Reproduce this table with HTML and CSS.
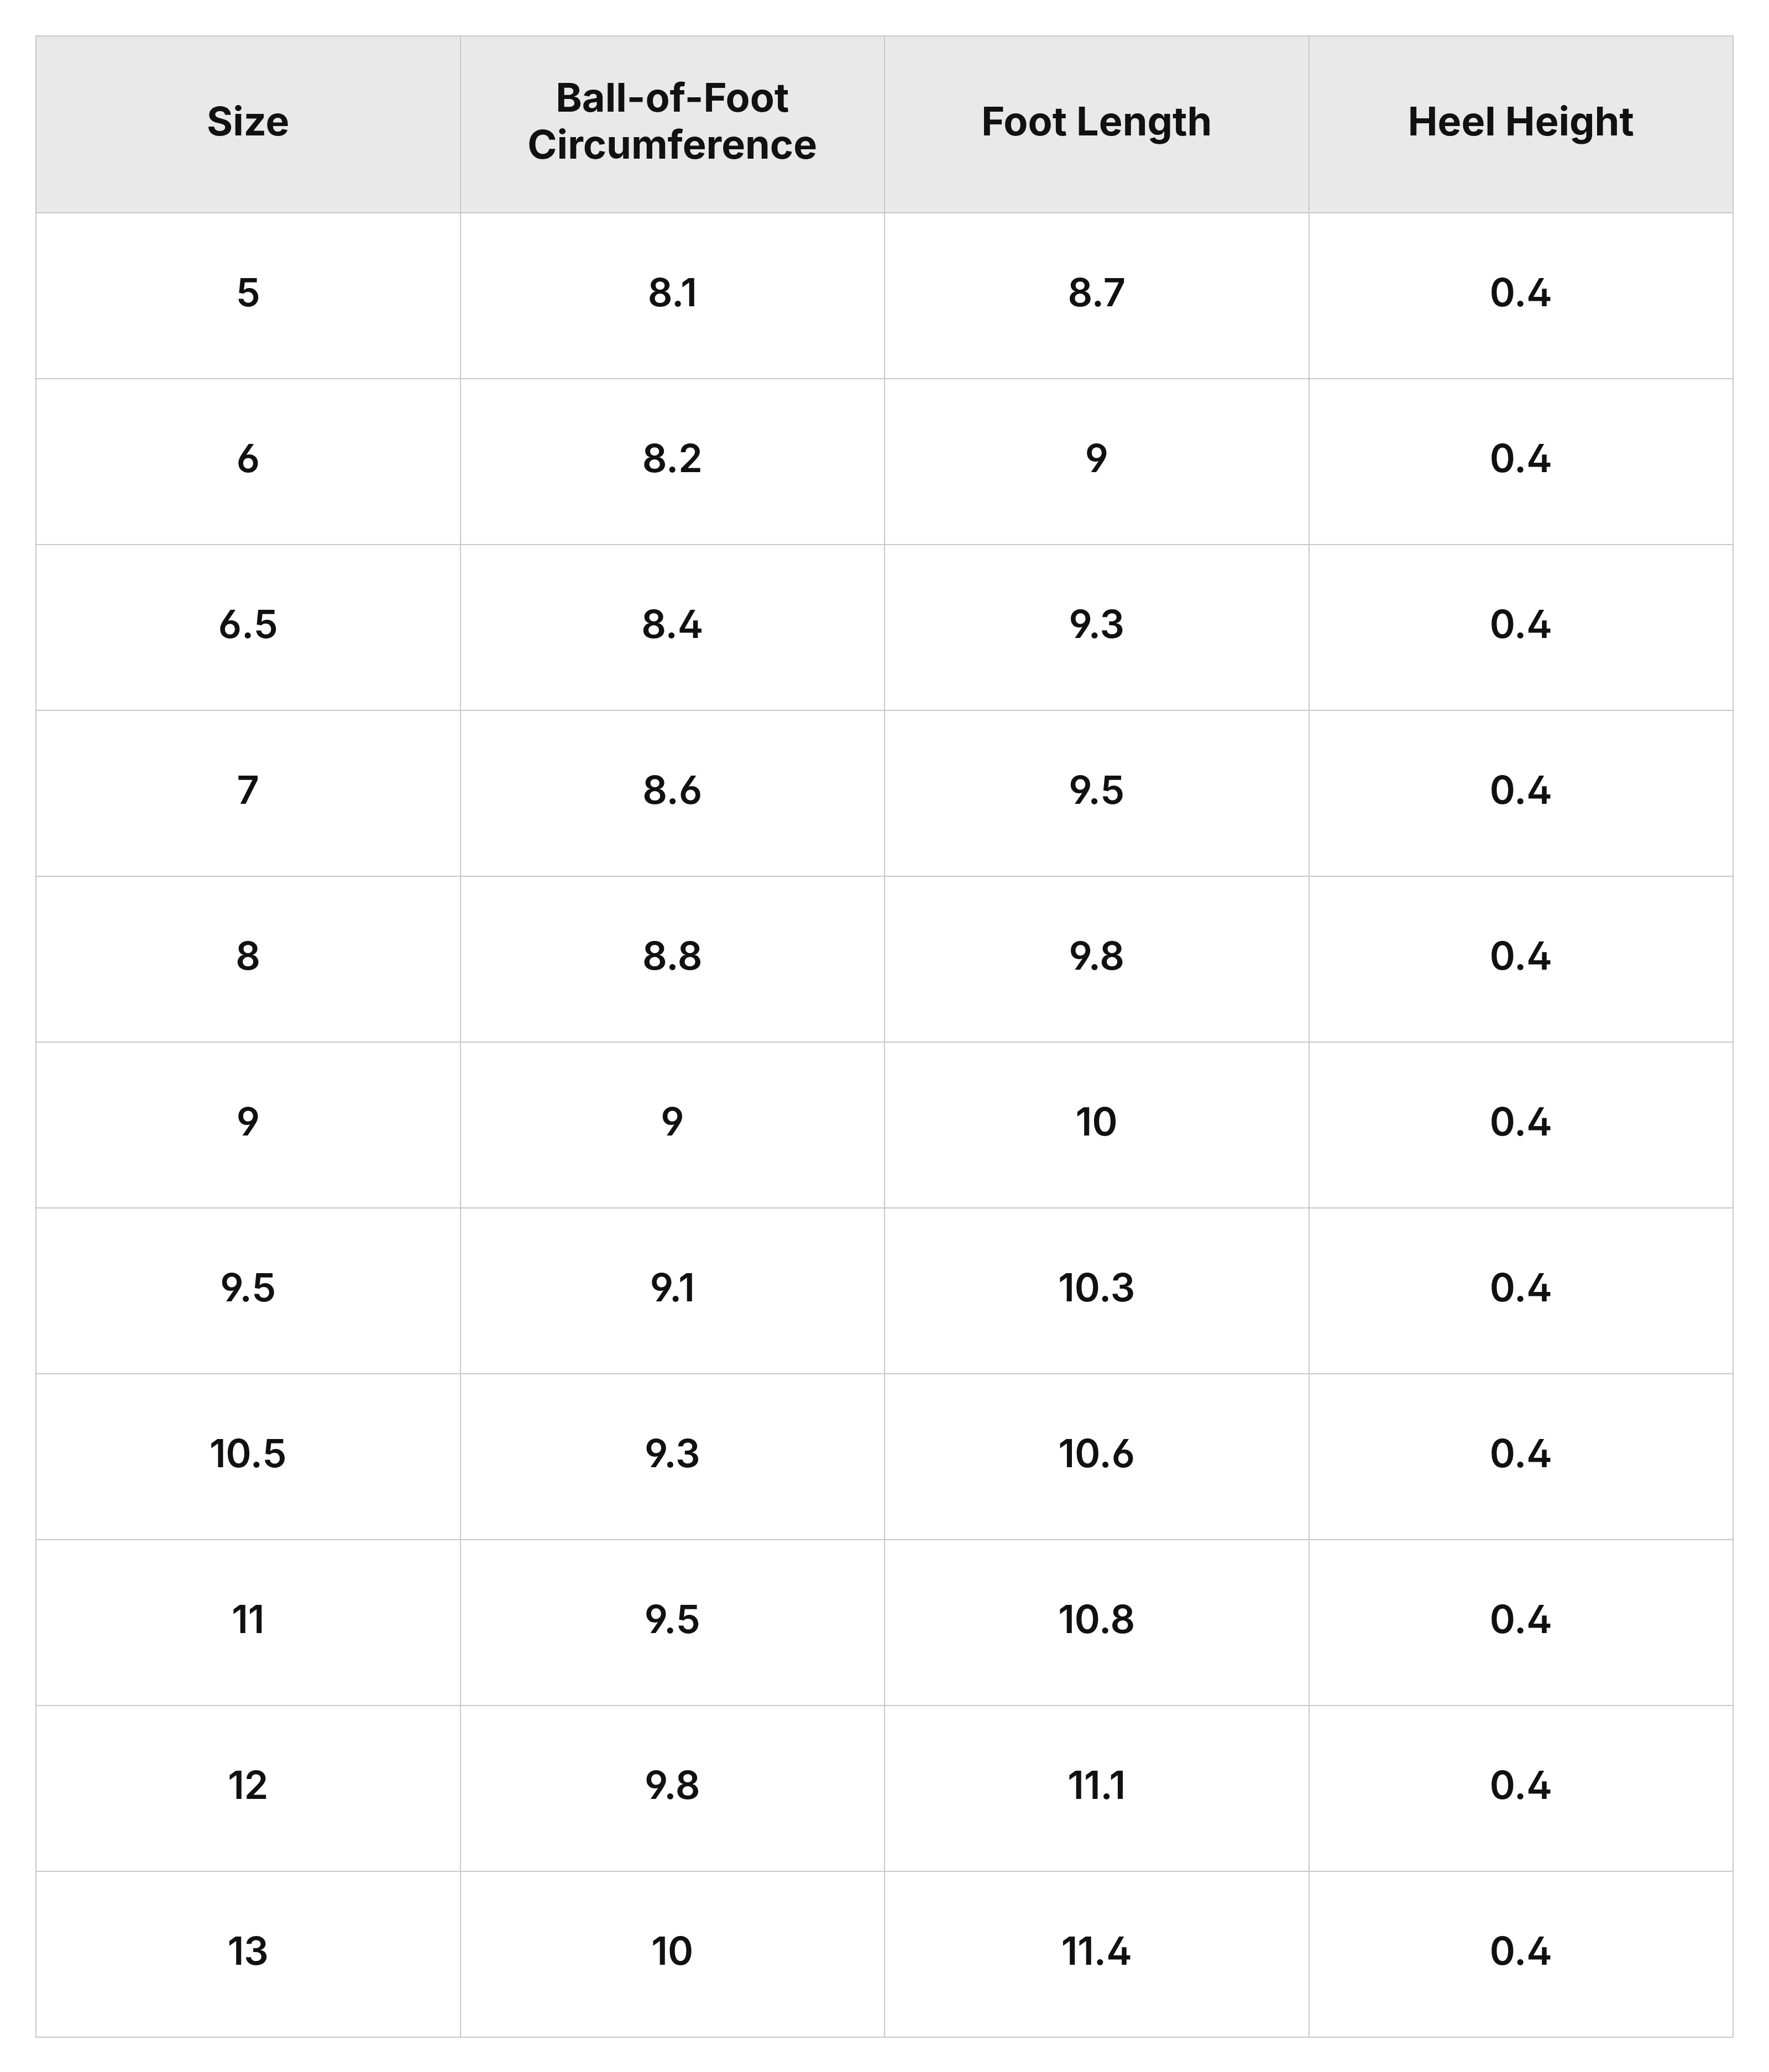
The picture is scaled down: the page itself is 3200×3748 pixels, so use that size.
FILE: index.html
```html
<!DOCTYPE html>
<html lang="en">
<head>
<meta charset="utf-8">
<title>Size Chart</title>
<link rel="stylesheet" href="styles.css">
</head>
<body>
<table class="size-table">
  <thead>
    <tr>
      <th>Size</th>
      <th>Ball-of-Foot<br>Circumference</th>
      <th>Foot Length</th>
      <th>Heel Height</th>
    </tr>
  </thead>
  <tbody>
    <tr><td>5</td><td>8.1</td><td>8.7</td><td>0.4</td></tr>
    <tr><td>6</td><td>8.2</td><td>9</td><td>0.4</td></tr>
    <tr><td>6.5</td><td>8.4</td><td>9.3</td><td>0.4</td></tr>
    <tr><td>7</td><td>8.6</td><td>9.5</td><td>0.4</td></tr>
    <tr><td>8</td><td>8.8</td><td>9.8</td><td>0.4</td></tr>
    <tr><td>9</td><td>9</td><td>10</td><td>0.4</td></tr>
    <tr><td>9.5</td><td>9.1</td><td>10.3</td><td>0.4</td></tr>
    <tr><td>10.5</td><td>9.3</td><td>10.6</td><td>0.4</td></tr>
    <tr><td>11</td><td>9.5</td><td>10.8</td><td>0.4</td></tr>
    <tr><td>12</td><td>9.8</td><td>11.1</td><td>0.4</td></tr>
    <tr><td>13</td><td>10</td><td>11.4</td><td>0.4</td></tr>
  </tbody>
</table>
</body>
</html>
```

FILE: styles.css
```css
html, body {
  margin: 0;
  padding: 0;
  background: #ffffff;
}

body {
  font-family: Inter, "Noto Sans", sans-serif;
  color: #111111;
  font-feature-settings: "cv02" 1, "cv03" 1, "cv04" 1;
}

.size-table {
  margin: 64px;
  width: 3072px;
  table-layout: fixed;
  border-collapse: collapse;
}

.size-table th,
.size-table td {
  border: 2px solid #c8c8c8;
  text-align: center;
  vertical-align: middle;
  padding: 0 0 14px 0;
}

.size-table th {
  background: #e9e9e9;
  font-size: 72px;
  font-weight: 700;
  line-height: 85px;
  height: 304px;
}

.size-table td {
  font-size: 70px;
  font-weight: 600;
  line-height: 85px;
  height: 284px;
}
```
